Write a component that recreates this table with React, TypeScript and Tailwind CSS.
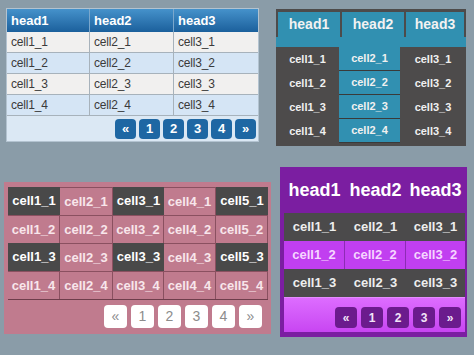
const font = "font-['Liberation_Sans',Arial,sans-serif]";

function BluePager() {
  const items = ["«", "1", "2", "3", "4", "»"];
  return (
    <div className="flex h-[25px] items-center justify-end gap-[3px] pr-[2px]">
      {items.map((p) => (
        <span
          key={p}
          className="flex h-[20px] w-[21px] items-center justify-center rounded-[4px] bg-[#1e67a3] text-[13px] font-bold text-white"
        >
          {p}
        </span>
      ))}
    </div>
  );
}

// top-left: blue striped table
function BlueTable() {
  const rows = [1, 2, 3, 4];
  return (
    <div className="ml-[6px] w-[253px] border border-[#b3c3d0] bg-[#dbe8f4]">
      <div className="grid h-[23px] grid-cols-[83px_84px_1fr] bg-gradient-to-b from-[#4592cb] to-[#1b609c]">
        {["head1", "head2", "head3"].map((h, i) => (
          <div
            key={h}
            className={`flex items-center px-[4px] text-[13px] font-bold text-white ${i < 2 ? "border-r border-[#7aa7cc]" : ""}`}
          >
            {h}
          </div>
        ))}
      </div>
      {rows.map((r) => (
        <div
          key={r}
          className={`grid h-[21px] grid-cols-[83px_84px_1fr] border-b border-[#a7b2bb] ${r % 2 ? "bg-[#f1f0ef]" : "bg-[#d5e5f5]"}`}
        >
          {[1, 2, 3].map((c) => (
            <div
              key={c}
              className={`flex items-center px-[4px] text-[12px] tracking-[-0.2px] text-[#3a3a3a] ${c < 3 ? "border-r border-[#a7b2bb]" : ""}`}
            >
              cell{c}_{r}
            </div>
          ))}
        </div>
      ))}
      <BluePager />
    </div>
  );
}

// top-right: teal header with dark body
function TealTable() {
  const rows = [1, 2, 3, 4];
  return (
    <div className="ml-[17px] mt-[1px] w-[190px] bg-[#4d4b4b] pb-[3px]">
      <div className="grid grid-cols-[62px_62px_1fr] gap-[2px] px-[2px] pt-[3px]">
        {["head1", "head2", "head3"].map((h) => (
          <div
            key={h}
            className="flex h-[25px] items-center justify-center bg-[#3190b1] text-[14px] font-bold text-[#f2f2f2]"
          >
            {h}
          </div>
        ))}
      </div>
      <div className="h-[10px] bg-[#3190b1]" />
      {rows.map((r) => (
        <div key={r} className="grid h-[24px] grid-cols-[63px_61px_1fr]">
          {[1, 2, 3].map((c) => (
            <div
              key={c}
              className={`flex items-center justify-center text-[11px] font-bold text-[#f0f0f0] ${c === 2 ? "border-b border-[#3a3a3a] bg-[#3190b1]" : ""}`}
            >
              cell{c}_{r}
            </div>
          ))}
        </div>
      ))}
    </div>
  );
}

// bottom-left: pink checkerboard
function PinkTable() {
  const rows = [1, 2, 3, 4];
  const pages = ["«", "1", "2", "3", "4", "»"];
  return (
    <div className="ml-[4px] mt-[15px] w-[267px] bg-[#c07b8e] pb-[6px] pl-[4px] pr-[3px] pt-[5px]">
      <div className="border-b border-[#6e3d4b]">
        {rows.map((r) => (
          <div key={r} className="grid h-[28px] grid-cols-[52px_53px_51px_52px_1fr]">
            {[1, 2, 3, 4, 5].map((c) => {
              const dark = r % 2 === 1 && c % 2 === 1;
              return (
                <div
                  key={c}
                  className={`flex items-center justify-center text-[13px] font-bold ${dark ? "bg-[#494949] text-white" : "border-r border-t border-[#8a5060] text-[#f8e6eb]"}`}
                >
                  cell{c}_{r}
                </div>
              );
            })}
          </div>
        ))}
      </div>
      <div className="mt-[5px] flex justify-end gap-[4px] pr-[6px]">
        {pages.map((p) => (
          <span
            key={p}
            className="flex h-[23px] w-[23px] items-center justify-center rounded-[4px] bg-white text-[14px] text-[#8c8c8c]"
          >
            {p}
          </span>
        ))}
      </div>
    </div>
  );
}

// bottom-right: purple / magenta
function PurpleTable() {
  const rows = [1, 2, 3];
  const pages = ["«", "1", "2", "3", "»"];
  return (
    <div className="ml-[9px] w-[187px] bg-[#7b1ea1] pb-[5px] pl-[4px] pr-[2px]">
      <div className="grid h-[46px] grid-cols-[61px_61px_1fr] items-center">
        {["head1", "head2", "head3"].map((h) => (
          <div key={h} className="text-center text-[18px] font-bold text-white">
            {h}
          </div>
        ))}
      </div>
      {rows.map((r) => (
        <div
          key={r}
          className={`grid h-[28px] grid-cols-[61px_61px_1fr] ${r === 2 ? "bg-[#c13ff0]" : "bg-[#4b4a4b]"}`}
        >
          {[1, 2, 3].map((c) => (
            <div
              key={c}
              className={`flex items-center justify-center text-[13px] font-bold ${r === 2 ? `text-[#f6d6ff] ${c < 3 ? "border-r border-[#8d2bb5]" : ""}` : "text-[#eeeeee]"}`}
            >
              cell{c}_{r}
            </div>
          ))}
        </div>
      ))}
      <div className="flex h-[35px] items-end justify-end gap-[4px] border-t border-[#e48cff] bg-gradient-to-b from-[#dd6cff] to-[#c845f2] pb-[4px] pr-[4px]">
        {pages.map((p) => (
          <span
            key={p}
            className="flex h-[21px] w-[22px] items-center justify-center rounded-[4px] bg-[#6b1b8d] text-[12px] font-bold text-[#f2e4f8]"
          >
            {p}
          </span>
        ))}
      </div>
    </div>
  );
}

export default function App() {
  return (
    <div className={`h-[355px] w-[474px] overflow-hidden bg-[#8a9ca8] ${font}`}>
      <div className="flex items-start pt-[8px]">
        <BlueTable />
        <TealTable />
      </div>
      <div className="mt-[21px] flex items-start">
        <PinkTable />
        <PurpleTable />
      </div>
    </div>
  );
}
